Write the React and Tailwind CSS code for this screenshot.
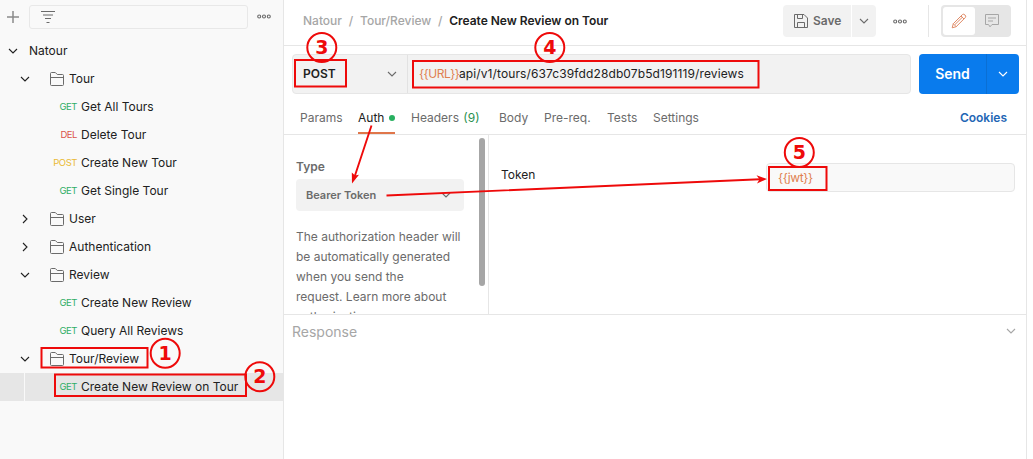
const methodColor = {
  GET: "text-[#2fae66]",
  DEL: "text-[#d9534a]",
  POST: "text-[#eab935]",
};

const tree = [
  { kind: "folder", name: "Tour", open: true },
  { kind: "request", method: "GET", name: "Get All Tours" },
  { kind: "request", method: "DEL", name: "Delete Tour" },
  { kind: "request", method: "POST", name: "Create New Tour" },
  { kind: "request", method: "GET", name: "Get Single Tour" },
  { kind: "folder", name: "User", open: false },
  { kind: "folder", name: "Authentication", open: false },
  { kind: "folder", name: "Review", open: true },
  { kind: "request", method: "GET", name: "Create New Review" },
  { kind: "request", method: "GET", name: "Query All Reviews" },
  { kind: "folder", name: "Tour/Review", open: true },
  { kind: "request", method: "GET", name: "Create New Review on Tour", selected: true },
];

function Chevron({ className = "", right = false }) {
  return (
    <svg viewBox="0 0 10 10" className={`h-2.5 w-2.5 shrink-0 ${className}`} fill="none" stroke="currentColor" strokeWidth="1.1">
      <path d={right ? "M3 1 L7 5 L3 9" : "M1 3 L5 7 L9 3"} />
    </svg>
  );
}

function Folder() {
  return (
    <svg viewBox="0 0 14 14" className="h-3.5 w-3.5 shrink-0 text-[#6b6b6b]" fill="none" stroke="currentColor" strokeWidth="1">
      <path d="M0.5 12.5 V1.5 Q0.5 0.5 1.5 0.5 H5.3 L7.3 2.5 H12.5 Q13.5 2.5 13.5 3.5 V12.5 Q13.5 13.5 12.5 13.5 H1.5 Q0.5 13.5 0.5 12.5 Z M0.5 5.5 H13.5" />
    </svg>
  );
}

function Dots() {
  return (
    <svg viewBox="0 0 14 5" className="h-[5px] w-3.5 shrink-0 text-[#6b6b6b]" fill="none" stroke="currentColor" strokeWidth="1.1">
      <circle cx="2.2" cy="2.5" r="1.5" />
      <circle cx="7" cy="2.5" r="1.5" />
      <circle cx="11.8" cy="2.5" r="1.5" />
    </svg>
  );
}

function TreeRow({ item }) {
  if (item.kind === "folder") {
    return (
      <div className="flex h-7 items-center pl-5">
        <Chevron right={!item.open} />
        <span className="ml-5 flex items-center gap-[5px]">
          <Folder />
          <span>{item.name}</span>
        </span>
      </div>
    );
  }
  return (
    <div className={`flex h-7 items-center ${item.selected ? "bg-[#e6e6e6]" : ""}`}>
      <span className={`h-full w-[25px] ${item.selected ? "border-r border-[#f9f9f9]" : ""}`} />
      <span className={`w-[52px] text-right text-[9.5px] tracking-[-0.45px] ${methodColor[item.method]}`}>{item.method}</span>
      <span className="ml-1">{item.name}</span>
    </div>
  );
}

function Sidebar() {
  return (
    <aside className="flex w-[284px] shrink-0 flex-col border-r border-[#e6e6e6] bg-[#f9f9f9]">
      <div className="flex h-[37px] items-start pt-[5px] pl-[7px]">
        <svg viewBox="0 0 12 12" className="mt-1.5 h-3 w-3 text-[#8a8a8a]" stroke="currentColor" strokeWidth="1.5">
          <path d="M6 0 V12 M0 6 H12" />
        </svg>
        <div className="ml-[10px] flex h-6 w-[219px] items-center rounded-[3px] border border-[#e8e8e8] pl-[11px]">
          <svg viewBox="0 0 14 12" className="h-3 w-3.5" stroke="#6b6b6b" strokeWidth="1">
            <path d="M0 0.5 H14 M2 4 H12 M4 7.5 H10 M5.5 11.5 H8.5" />
          </svg>
        </div>
        <span className="mt-[9px] ml-[9px] flex">
          <Dots />
        </span>
      </div>
      <div className="flex h-7 items-center gap-[11px] pl-2">
        <Chevron />
        <span>Natour</span>
      </div>
      {tree.map((item) => (
        <TreeRow key={item.name} item={item} />
      ))}
    </aside>
  );
}

function Header() {
  return (
    <header className="flex h-[46px] items-start border-b border-[#e6e6e6] pt-[5px] pl-[19px]">
      <div className="flex h-8 w-[480px] items-center gap-[6.8px] font-medium text-[#a6a6a6]">
        <span>Natour</span>
        <span>/</span>
        <span>Tour/Review</span>
        <span>/</span>
        <span className="font-semibold tracking-[-0.02px] text-[#212121]">Create New Review on Tour</span>
      </div>
      <div className="flex h-8 w-[68px] items-center gap-[5px] rounded-l bg-[#f2f2f2] pl-[11px] font-semibold text-[#6b6b6b]">
        <svg viewBox="0 0 14 14" className="h-3.5 w-3.5" fill="none" stroke="currentColor" strokeWidth="1">
          <path d="M0.5 0.5 H10 L13.5 4 V13.5 H0.5 Z M3.5 0.5 V4.5 H8.5 V0.5 M3.5 13.5 V8.5 H10.5 V13.5" />
        </svg>
        <span>Save</span>
      </div>
      <div className="ml-px flex h-8 w-6 items-center justify-center rounded-r bg-[#f2f2f2] text-[#6b6b6b]">
        <Chevron />
      </div>
      <span className="ml-[17px] flex h-8 items-center">
        <Dots />
      </span>
      <span className="ml-[21px] h-8 w-px bg-[#e6e6e6]" />
      <div className="ml-3 flex h-8 w-[70px] items-center rounded bg-[#e6e6e6] p-0.5">
        <div className="flex h-7 w-8 items-center justify-center rounded-[3px] bg-white">
          <svg viewBox="0 0 16 16" className="h-4 w-4" fill="none" stroke="#e08a66" strokeWidth="1">
            <path d="M1.2 14.8 L2.3 10.7 L11.5 1.5 Q12.7 0.7 13.9 1.9 Q15.3 3.2 14.4 4.5 L5.2 13.7 Z M10 3 L13 6 M2.3 10.7 L5.2 13.7 M4 11.5 L11.3 4.3" />
          </svg>
        </div>
        <div className="flex h-7 flex-1 items-center justify-center">
          <svg viewBox="0 0 14 14" className="h-3.5 w-3.5" fill="none" stroke="#a6a6a6" strokeWidth="1">
            <path d="M0.5 0.5 H13.5 V10.5 H7 L5 12.8 L3.5 10.5 H0.5 Z M3 4 H11 M3 7 H8" />
          </svg>
        </div>
      </div>
    </header>
  );
}

function UrlBar() {
  return (
    <div className="flex h-12 items-end gap-2 pl-2">
      <div className="flex h-10 w-[619px] rounded border border-[#e6e6e6] bg-[#f2f2f2]">
        <div className="flex w-[115px] items-center justify-between border-r border-[#e2e2e2] px-[10px] font-semibold">
          <span>POST</span>
          <Chevron className="text-[#6b6b6b]" />
        </div>
        <div className="flex items-center pb-px pl-[11px]">
          <span className="w-10 tracking-[-0.5px] text-[#e08050]">{"{{URL}}"}</span>
          <span className="tracking-[0.11px]">api/v1/tours/637c39fdd28db07b5d191119/reviews</span>
        </div>
      </div>
      <div className="flex h-10 w-[100px] rounded bg-[#097bed] text-white">
        <div className="flex w-[68px] items-center justify-center border-r border-[#0a6fd4] pb-px text-[14px] font-semibold">Send</div>
        <div className="flex flex-1 items-center justify-center">
          <Chevron />
        </div>
      </div>
    </div>
  );
}

function Tabs() {
  return (
    <nav className="flex h-[41px] items-stretch border-b border-[#e6e6e6] pr-[19px] pl-4 leading-[48px] text-[#6b6b6b]">
      <span className="w-[58px]">Params</span>
      <span className="relative flex w-[53px] text-[#212121]">
        Auth
        <span className="mt-[21px] ml-[5px] h-1.5 w-1.5 rounded-full bg-[#28b060]" />
        <span className="absolute bottom-0 left-0 h-0.5 w-[37px] bg-[#e0764a]" />
      </span>
      <span className="w-[88px]">
        Headers <span className="ml-px text-[#2a9150]">(9)</span>
      </span>
      <span className="w-[45px]">Body</span>
      <span className="w-[63px]">Pre-req.</span>
      <span className="w-[46px]">Tests</span>
      <span>Settings</span>
      <span className="ml-auto font-semibold text-[#1f66b5]">Cookies</span>
    </nav>
  );
}

function AuthPanel() {
  return (
    <section className="flex h-[180px] overflow-hidden border-b border-[#e6e6e6]">
      <div className="flex w-[205px] shrink-0 border-r border-[#e6e6e6] pl-3">
        <div className="w-[168px] pt-6 text-[#6b6b6b]">
          <div className="leading-4 font-semibold">Type</div>
          <div className="mt-1 flex h-8 items-center justify-between rounded bg-[#f2f2f2] pr-[13px] pl-[10px] text-[11px] font-semibold">
            <span>Bearer Token</span>
            <Chevron />
          </div>
          <p className="mt-4 leading-5">
            The authorization header will<br />be automatically generated<br />when you send the<br />request. Learn more about<br />authorization
          </p>
        </div>
        <span className="mt-[3px] ml-[15px] h-[148px] w-1.5 rounded-full bg-[#a6a6a6]" />
      </div>
      <div className="flex flex-1 items-start pt-7 pl-3">
        <span className="w-[265px] pt-[3px]">Token</span>
        <div className="flex h-[29px] w-[249px] items-center rounded border border-[#e6e6e6] bg-[#f9f9f9] pl-[11px] tracking-[-0.4px] text-[#e08050]">
          <span>{"{{jwt}}"}</span>
        </div>
      </div>
    </section>
  );
}

const frames = [
  { x: 41.5, y: 348, w: 106, h: 19.5 },
  { x: 55, y: 374.5, w: 191, h: 21.5 },
  { x: 295, y: 60, w: 51, h: 26.5 },
  { x: 413, y: 61, w: 345.5, h: 26.5 },
  { x: 769, y: 167, w: 57.5, h: 23 },
];

const badges = [
  { n: 1, x: 165.2, y: 353.2 },
  { n: 2, x: 259.8, y: 376.7 },
  { n: 3, x: 321.8, y: 47.5 },
  { n: 4, x: 549.8, y: 47.5 },
  { n: 5, x: 799.3, y: 152.5 },
];

function Annotations() {
  return (
    <svg viewBox="0 0 1033 459" className="pointer-events-none absolute inset-0 h-[459px] w-[1033px]" fill="none" stroke="#ee0a0a" strokeWidth="2">
      {frames.map((f) => (
        <rect key={f.x} x={f.x} y={f.y} width={f.w} height={f.h} />
      ))}
      <path d="M371.5 125.5 L354.5 177 M386.5 195.5 L760 179.2" strokeWidth="1.9" />
      <path d="M352 183.5 L351.8 172.5 L355 175.5 L359 174.8 Z M767 179 L757 183.5 L759.5 179.3 L756.5 175.2 Z" fill="#ee0a0a" stroke="none" />
      {badges.map((b) => (
        <g key={b.n}>
          <circle cx={b.x} cy={b.y} r="14.5" />
          <text x={b.x} y={b.y + 6.5} textAnchor="middle" fill="#ee0a0a" stroke="none" className="font-['DejaVu_Sans',sans-serif] text-[19px] font-bold">
            {b.n}
          </text>
        </g>
      ))}
    </svg>
  );
}

export default function App() {
  return (
    <div className="relative flex h-[459px] w-[1033px] overflow-hidden bg-white font-['Inter',sans-serif] text-[12px] text-[#212121]">
      <Sidebar />
      <main className="flex w-[743px] shrink-0 flex-col border-r border-[#e6e6e6]">
        <Header />
        <UrlBar />
        <Tabs />
        <AuthPanel />
        <div className="flex h-8 items-center justify-between pr-[10px] pl-2 text-[#a6a6a6]">
          <span className="text-[14px]">Response</span>
          <Chevron />
        </div>
      </main>
      <Annotations />
    </div>
  );
}
